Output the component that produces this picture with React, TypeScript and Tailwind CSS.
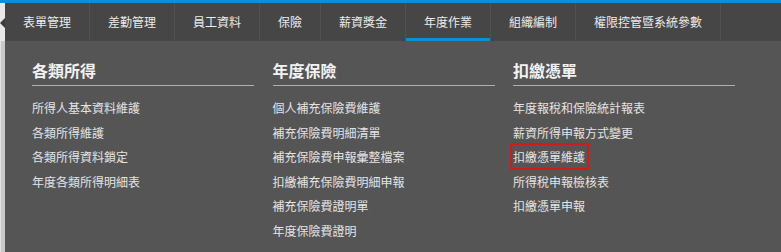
import React from "react";

const tabs = [
  "表單管理",
  "差勤管理",
  "員工資料",
  "保險",
  "薪資獎金",
  "年度作業",
  "組織編制",
  "權限控管暨系統參數",
];

const columns: { title: string; items: string[] }[] = [
  {
    title: "各類所得",
    items: ["所得人基本資料維護", "各類所得維護", "各類所得資料鎖定", "年度各類所得明細表"],
  },
  {
    title: "年度保險",
    items: [
      "個人補充保險費維護",
      "補充保險費明細清單",
      "補充保險費申報彙整檔案",
      "扣繳補充保險費明細申報",
      "補充保險費證明單",
      "年度保險費證明",
    ],
  },
  {
    title: "扣繳憑單",
    items: ["年度報稅和保險統計報表", "薪資所得申報方式變更", "扣繳憑單維護", "所得稅申報檢核表", "扣繳憑單申報"],
  },
];

export default function App() {
  return (
    <div
      className="flex h-[252px] w-[781px] flex-col overflow-hidden bg-[#555555]"
      style={{ fontFamily: '"Noto Sans CJK TC", "Noto Sans", sans-serif' }}
    >
      {/* top accent */}
      <div className="h-[3px] w-full bg-[#0b8fd6]" />

      <div className="flex flex-1">
        {/* page edge on the left */}
        <div className="flex w-[5px] flex-col">
          <div className="relative h-[38px] bg-[#e9e9e9]">
            <div className="absolute left-0 top-[15px] h-0 w-0 border-y-[5px] border-r-[5px] border-y-transparent border-r-[#3c3c3c]" />
          </div>
          <div className="flex-1 border-l border-[#e2e2e2] bg-[#c9c9c9]" />
        </div>

        <div className="flex flex-1 flex-col">
          {/* Nav bar */}
          <nav className="flex h-[38px] bg-[#464646]">
            {tabs.map((tab) => (
              <div
                key={tab}
                className={`relative flex items-center border-r border-[#525252] px-[18px] text-[12px] text-[#ececec] ${
                  tab === "年度作業" ? "after:absolute after:inset-x-0 after:bottom-0 after:h-[3px] after:bg-[#0b8fd6]" : ""
                }`}
              >
                {tab}
              </div>
            ))}
          </nav>

          {/* Dropdown panel */}
          <div className="flex flex-1 pl-[27px] pt-[17px]">
            {columns.map((col) => (
              <div key={col.title} className="w-[240.5px]">
                <div className="w-[222px] border-b border-[#b0b0b0] pb-[3px]">
                  <h2 className="text-[16px] font-bold leading-[24px] text-[#f2f2f2]">{col.title}</h2>
                </div>
                <ul className="mt-[10px]">
                  {col.items.map((item) => (
                    <li key={item} className="text-[12px] leading-[24.6px] text-[#e4e4e4]">
                      {item === "扣繳憑單維護" ? (
                        <span className="relative">
                          {item}
                          <span className="absolute -left-[3px] -right-[4px] -top-[5px] -bottom-[5px] border-2 border-[#d11a1a]" />
                        </span>
                      ) : (
                        item
                      )}
                    </li>
                  ))}
                </ul>
              </div>
            ))}
          </div>
        </div>
      </div>
    </div>
  );
}
